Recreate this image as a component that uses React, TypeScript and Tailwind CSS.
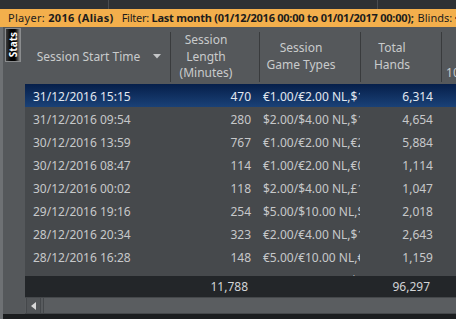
import React from "react";

const rows = [
  ["31/12/2016 15:15", "470", "€1.00/€2.00 NL,$1.00/$2.00 NL", "6,314"],
  ["31/12/2016 09:54", "280", "$2.00/$4.00 NL,$1.00/$2.00 NL", "4,654"],
  ["30/12/2016 13:59", "767", "€1.00/€2.00 NL,€2.00/€4.00 NL", "5,884"],
  ["30/12/2016 08:47", "114", "€1.00/€2.00 NL,€0.50/€1.00 NL", "1,114"],
  ["30/12/2016 00:02", "118", "$2.00/$4.00 NL,£1.00/£2.00 NL", "1,047"],
  ["29/12/2016 19:16", "254", "$5.00/$10.00 NL,$2.00/$4.00 NL", "2,018"],
  ["28/12/2016 20:34", "323", "€2.00/€4.00 NL,$1.00/$2.00 NL", "2,643"],
  ["28/12/2016 16:28", "148", "€5.00/€10.00 NL,€2.00/€4.00 NL", "1,159"],
  ["27/12/2016 21:40", "312", "€2.00/€4.00 NL,$2.00/$4.00 NL", "2,352"],
];

const cols = "grid grid-cols-[145px_89px_101px_81px_87px]";

function HeaderCell({ lines, first, arrow }: { lines: string[]; first?: boolean; arrow?: boolean }) {
  return (
    <div className={`relative my-[5px] flex items-center ${first ? "" : "border-l border-[#393b3d]"}`}>
      <div className="flex w-full flex-col items-center justify-center pr-[18px] leading-[16.5px] whitespace-nowrap">
        {lines.map((l, i) => (
          <span key={i}>{l}</span>
        ))}
      </div>
      {arrow && (
        <svg className="absolute right-[9px] top-[22px]" width="8" height="5" viewBox="0 0 8 5">
          <path d="M0 0 H8 L4 4.5 Z" fill="#c4c6c8" />
        </svg>
      )}
    </div>
  );
}

export default function App() {
  return (
    <div className="flex h-[319px] w-[456px] flex-col overflow-hidden bg-[#55585b] font-['Noto_Sans',sans-serif] text-[12px]">
      {/* top strip */}
      <div className="flex h-[9px] shrink-0 bg-[#2e3134]">
        <div className="w-[109px] border-r border-[#4a4d50]" />
        <div className="w-[269px] border-r border-[#4a4d50]" />
      </div>

      {/* filter bar */}
      <div className="flex h-[18px] shrink-0 items-center whitespace-nowrap bg-[#f3af4c] pl-[8px] text-[11px] text-[#1c1c1c]">
        <span className="tracking-[0.3px]">
          Player: <b>2016 (Alias)</b>
        </span>
        <span className="ml-[8px] tracking-[-0.25px]">
          Filter: <b>Last month (01/12/2016 00:00 to 01/01/2017 00:00);</b>
        </span>
        <span className="ml-[4px]">
          Blinds: <b>€1.00/€2.00</b>
        </span>
      </div>

      <div className="flex min-h-0 flex-1">
        <div className="w-[3px] shrink-0 bg-[#6e7174]" />

        <div className="flex min-w-0 flex-1 flex-col">
          <div className="flex min-h-0 flex-1">
            {/* gutter */}
            <div className="w-[22px] shrink-0 pl-[2px] pt-[1px]">
              <div className="flex h-[34px] w-[16px] items-center justify-center border border-[#8a8c8e] bg-[linear-gradient(to_right,#3c3c3c,#000_35%,#000_65%,#8a8a8a)]">
                <span className="rotate-180 text-[10px] font-bold leading-none text-white [writing-mode:vertical-rl]">
                  Stats
                </span>
              </div>
            </div>

            {/* grid */}
            <div className="flex min-w-0 flex-1 flex-col overflow-hidden">
              <div className={`${cols} h-[57px] shrink-0 text-[#c9cbcc]`}>
                <HeaderCell first arrow lines={["Session Start Time"]} />
                <HeaderCell lines={["Session", "Length", "(Minutes)"]} />
                <HeaderCell lines={["Session", "Game Types"]} />
                <HeaderCell lines={["Total", "Hands"]} />
                <HeaderCell lines={["Won", "bb per", "100 Hands"]} />
              </div>

              <div className="min-h-0 flex-1 overflow-hidden bg-[#46494c] text-[#c6c8ca]">
                {rows.map((r, i) => (
                  <div
                    key={i}
                    className={`${cols} h-[23px] items-center whitespace-nowrap pt-[2px] ${
                      i === 0 ? "bg-[linear-gradient(to_bottom,#061f4a,#1a4177)] text-[#e2e8f0]" : ""
                    }`}
                  >
                    <div className="pl-[8px]">{r[0]}</div>
                    <div className="pr-[8px] text-right">{r[1]}</div>
                    <div className="overflow-hidden pl-[4px] pr-[2px]">{r[2]}</div>
                    <div className="pr-[8px] text-right">{r[3]}</div>
                    <div />
                  </div>
                ))}
              </div>

              <div className={`${cols} h-[21px] shrink-0 items-center bg-[#232629] text-[#d2d4d6]`}>
                <div />
                <div className="pr-[11px] text-right">11,788</div>
                <div />
                <div className="pr-[11px] text-right">96,297</div>
                <div />
              </div>

              {/* scrollbar */}
              <div className="flex h-[17px] shrink-0 border-y border-[#45484b] bg-[#585b5e]">
                <div className="ml-[1px] flex w-[15px] items-center justify-center border-x border-[#45484b] bg-[#525558]">
                  <svg width="5" height="8" viewBox="0 0 5 8">
                    <path d="M5 0 V8 L0 4 Z" fill="#d8d8d8" />
                  </svg>
                </div>
                <div className="ml-[2px] flex-1 border-l border-[#45484b] bg-[#5a5d60]" />
              </div>
            </div>
          </div>

          <div className="h-[5px] shrink-0 bg-[#1b1d1f]" />
        </div>
      </div>
    </div>
  );
}
